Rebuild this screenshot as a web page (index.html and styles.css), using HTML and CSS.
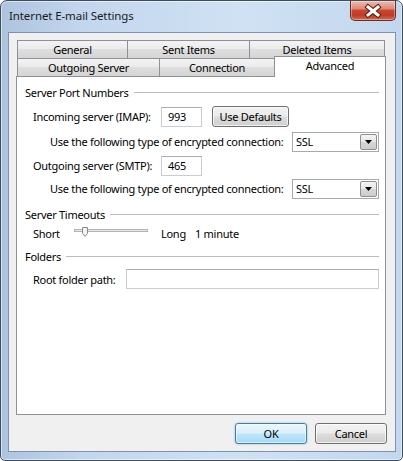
FILE: index.html
```html
<!DOCTYPE html>
<html>
<head>
<meta charset="utf-8">
<link rel="stylesheet" href="styles.css">
</head>
<body>
<div class="window">
  <div class="titlebar">
    <span class="title">Internet E-mail Settings</span>
    <div class="close">
      <svg width="44" height="19" viewBox="0 0 44 19">
        <path d="M17 6 L27 14 M27 6 L17 14" stroke="#5a1d15" stroke-width="5" stroke-linecap="square" fill="none"/>
        <path d="M17 6 L27 14 M27 6 L17 14" stroke="#ffffff" stroke-width="3" stroke-linecap="square" fill="none"/>
      </svg>
    </div>
  </div>
  <div class="client">
    <div class="tabs">
      <div class="tabrow back">
        <div class="tab w-general">General</div>
        <div class="tab w-sent">Sent Items</div>
        <div class="tab w-deleted">Deleted Items</div>
      </div>
      <div class="tabrow front">
        <div class="tab w-outgoing">Outgoing Server</div>
        <div class="tab w-conn">Connection</div>
        <div class="tab active w-adv">Advanced</div>
      </div>
    </div>
    <div class="panel">
      <div class="group g1"><span>Server Port Numbers</span><i class="rule"></i></div>
      <div class="row r-in">
        <span class="lbl w-port">Incoming server (IMAP):</span>
        <div class="field port">993</div>
        <div class="btn defaults">Use Defaults</div>
      </div>
      <div class="row enc r-enc1">
        <span class="lbl">Use the following type of encrypted connection:</span>
        <div class="select"><span>SSL</span><div class="drop"><svg width="7" height="4" viewBox="0 0 7 4"><path d="M0 0 H7 L3.5 4 Z" fill="#000"/></svg></div></div>
      </div>
      <div class="row r-out">
        <span class="lbl w-port">Outgoing server (SMTP):</span>
        <div class="field port">465</div>
      </div>
      <div class="row enc r-enc2">
        <span class="lbl">Use the following type of encrypted connection:</span>
        <div class="select"><span>SSL</span><div class="drop"><svg width="7" height="4" viewBox="0 0 7 4"><path d="M0 0 H7 L3.5 4 Z" fill="#000"/></svg></div></div>
      </div>
      <div class="group g2"><span>Server Timeouts</span><i class="rule"></i></div>
      <div class="row r-slider">
        <span class="lbl w-short">Short</span>
        <svg class="slider" width="74" height="12" viewBox="0 0 74 12">
          <rect x="0.5" y="3.5" width="73" height="2" fill="#e6e6e6" stroke="#b4b4b4"/>
          <line x1="1" y1="6.5" x2="74" y2="6.5" stroke="#ffffff"/>
          <path d="M8.5 1.5 H13.5 V7.5 L11 10.5 L8.5 7.5 Z" fill="#f2f2f2" stroke="#8a8a8a"/>
        </svg>
        <span class="lbl w-long">Long</span>
        <span class="lbl">1 minute</span>
      </div>
      <div class="group g3"><span>Folders</span><i class="rule"></i></div>
      <div class="row r-root">
        <span class="lbl w-root">Root folder path:</span>
        <div class="field wide"></div>
      </div>
    </div>
    <div class="buttons">
      <div class="btn ok">OK</div>
      <div class="btn cancel">Cancel</div>
    </div>
  </div>
</div>
</body>
</html>
```

FILE: styles.css
```css
* { box-sizing: border-box; }
html, body { margin: 0; padding: 0; background: #ffffff; }
body {
  font-family: "Noto Sans", "Open Sans", sans-serif;
  font-size: 11px;
  letter-spacing: -0.28px;
  color: #000;
}
.window {
  width: 403px;
  height: 461px;
  border: 1px solid #3e4d5e;
  border-radius: 7px 7px 5px 5px;
  background: linear-gradient(to right, #adc4df 0%, #c2d6ed 20%, #d0e1f3 60%, #c2d7ee 100%);
  box-shadow: inset 0 0 0 1px rgba(255,255,255,0.55);
  display: flex;
  flex-direction: column;
  overflow: hidden;
}
.titlebar {
  height: 31px;
  flex: none;
  display: flex;
  align-items: flex-start;
  padding-left: 8px;
}
.title {
  margin-top: 7px;
  font-size: 11.5px;
  color: #1b1b1b;
  letter-spacing: -0.1px;
}
.close {
  margin-left: auto;
  margin-right: 6px;
  width: 46px;
  height: 20px;
  border: 1px solid #6b2c24;
  border-top: none;
  border-radius: 0 0 5px 5px;
  background: linear-gradient(#eebcaf 0%, #df8a78 40%, #c8462f 50%, #bf3b25 75%, #d46a52 100%);
  box-shadow: inset 0 0 0 1px rgba(255,255,255,0.35);
  display: flex;
  align-items: center;
  justify-content: center;
}
.client {
  flex: none;
  margin: 0 6px 0 7px;
  height: 420px;
  background: #f0f0f0;
  border: 1px solid #7d93ab;
  padding: 6px 9px 0 7px;
  display: flex;
  flex-direction: column;
}
.tabs { display: flex; flex-direction: column; padding-top: 1px; }
.tabrow { display: flex; padding-left: 1px; height: 18px; }
.tabrow.front { align-items: flex-end; }
.tab {
  height: 18px;
  border: 1px solid #8e9198;
  border-bottom: none;
  background: linear-gradient(#f3f3f3 0%, #ebebeb 45%, #dedede 50%, #d5d5d5 100%);
  display: flex;
  align-items: center;
  justify-content: center;
  white-space: nowrap;
  margin-right: -1px;
}
.tab.active {
  height: 21px;
  margin-bottom: -1px;
  background: #ffffff;
  position: relative;
  z-index: 2;
  align-items: flex-start;
  padding-top: 1px;
  margin-right: 0;
}
.w-general { width: 111px; }
.w-sent { width: 123px; }
.w-deleted { width: 136px; }
.w-outgoing { width: 143px; }
.w-conn { width: 116px; }
.w-adv { width: 112px; }

.panel {
  height: 339px;
  background: #ffffff;
  border: 1px solid #8e9198;
  padding: 7px 6px 0 8px;
  display: flex;
  flex-direction: column;
}
.group {
  height: 16px;
  display: flex;
  align-items: center;
}
.group .rule {
  flex: 1;
  height: 1px;
  background: #bcbcbc;
  margin-left: 5px;
}
.g2 { margin-top: 7px; }
.g3 { margin-top: 5px; }
.row {
  display: flex;
  align-items: center;
  padding-left: 8px;
  height: 21px;
  white-space: nowrap;
}
.row.enc { padding-left: 25px; }
.r-in { margin-top: 6px; }
.r-enc1 { margin-top: 4px; }
.r-out { margin-top: 3px; }
.r-enc2 { margin-top: 2px; }
.r-slider { margin-top: 1px; height: 20px; }
.r-root { margin-top: 5px; height: 20px; }
.lbl { flex: none; }
.w-port { width: 128px; }
.w-short { width: 41px; }
.w-long { width: 34px; margin-left: 13px; }
.w-root { width: 93px; }
.slider { flex: none; margin-top: -2px; }
.field {
  height: 20px;
  border: 1px solid #abadb3;
  border-left-color: #c9ccd4;
  border-right-color: #c9ccd4;
  border-bottom-color: #c9ccd4;
  background: #fff;
  padding-left: 6px;
  display: flex;
  align-items: center;
}
.port { width: 41px; }
.wide { flex: 1; height: 20px; }
.select {
  margin-left: auto;
  width: 87px;
  height: 20px;
  border: 1px solid #a5a9b0;
  background: #fff;
  display: flex;
  align-items: center;
  padding-left: 3px;
  padding-right: 1px;
}
.select span { flex: 1; }
.drop {
  width: 17px;
  height: 16px;
  border: 1px solid #8f8f8f;
  border-radius: 2px;
  background: linear-gradient(#f4f4f4 0%, #e6e6e6 50%, #d6d6d6 51%, #cdcdcd 100%);
  display: flex;
  align-items: center;
  justify-content: center;
}
.btn {
  height: 21px;
  border: 1px solid #707070;
  border-radius: 3px;
  background: linear-gradient(#f2f2f2 0%, #ebebeb 48%, #dddddd 52%, #cfcfcf 100%);
  box-shadow: inset 0 0 0 1px rgba(255,255,255,0.7);
  display: flex;
  align-items: center;
  justify-content: center;
}
.defaults { width: 77px; margin-left: 10px; }
.buttons {
  display: flex;
  justify-content: flex-end;
  gap: 8px;
  margin-top: 8px;
  margin-right: -1px;
}
.ok, .cancel { width: 72px; }
.ok {
  border-color: #3c7fb1;
  background: linear-gradient(#eaf6fd 0%, #d9f0fc 48%, #bee6fd 52%, #a7d9f5 100%);
  box-shadow: inset 0 0 0 1px rgba(255,255,255,0.6), 0 0 2px rgba(60,127,177,0.6);
}
```
